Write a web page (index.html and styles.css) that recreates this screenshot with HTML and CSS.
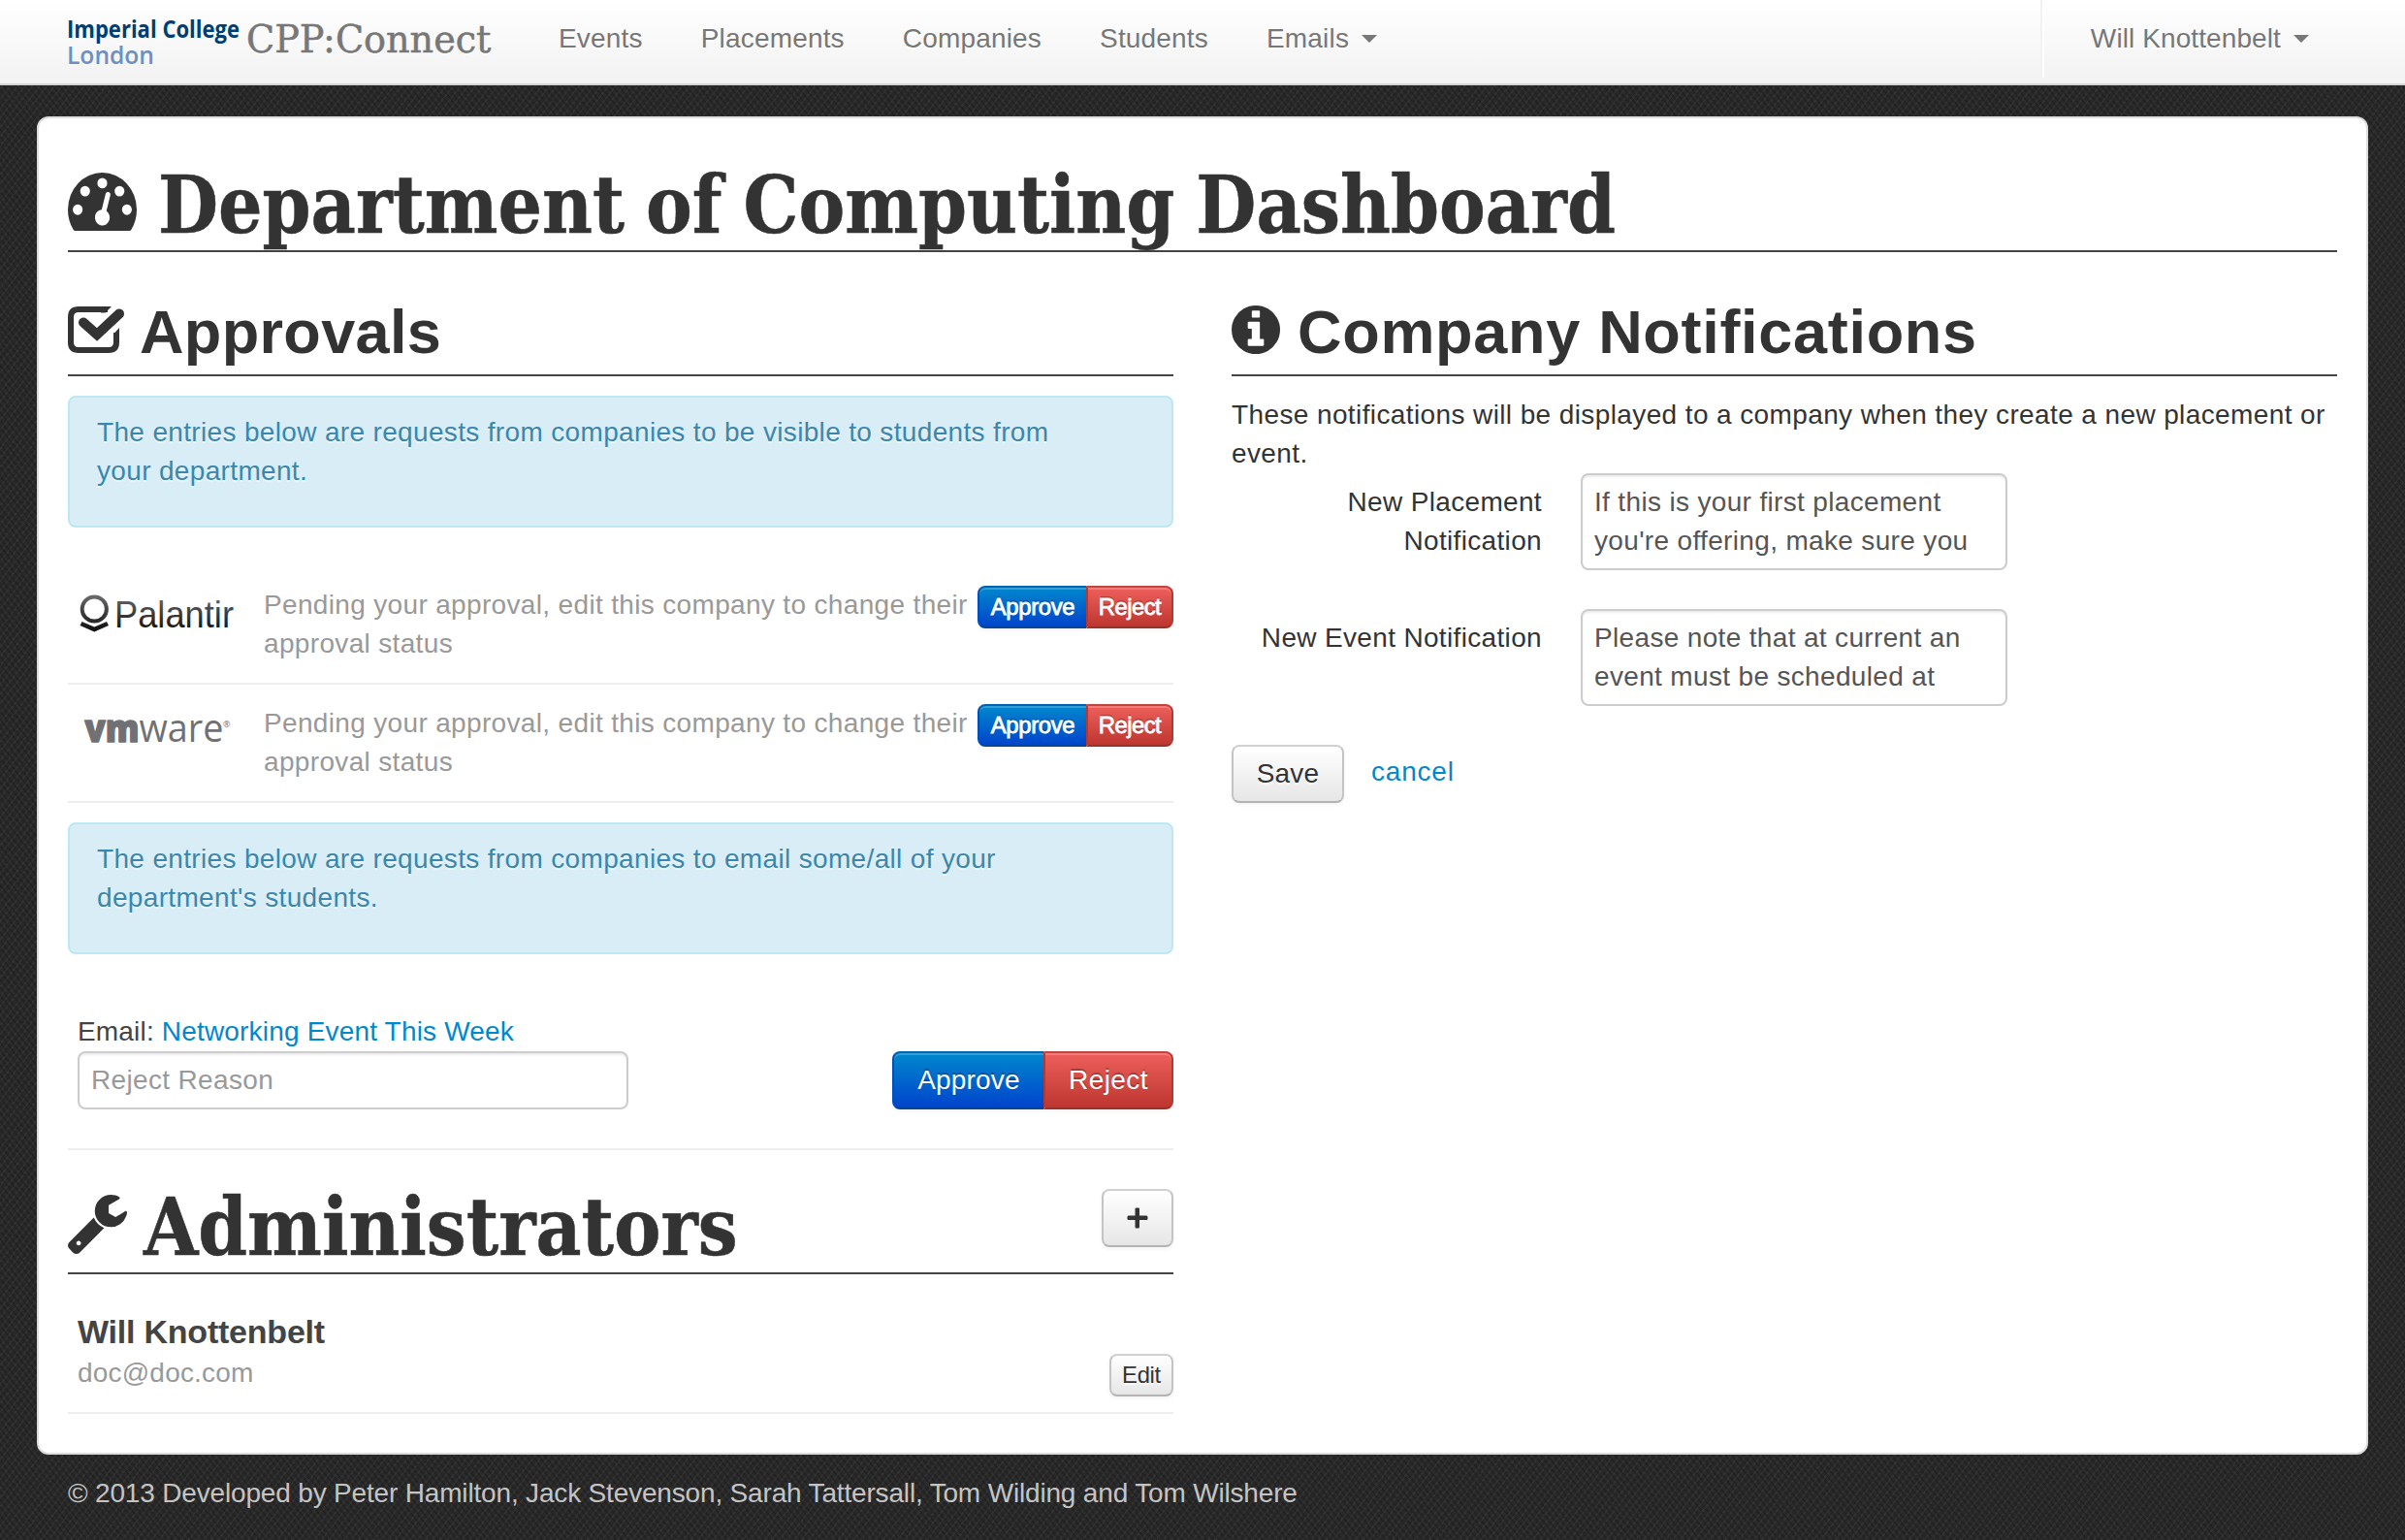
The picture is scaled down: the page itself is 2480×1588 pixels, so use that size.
FILE: index.html
```html
<!DOCTYPE html>
<html lang="en">
<head>
<meta charset="utf-8">
<title>CPP:Connect - Department of Computing Dashboard</title>
<link rel="stylesheet" href="styles.css">
</head>
<body>
<header class="navbar">
  <a class="brand" href="#">
    <svg class="college-logo" viewBox="0 0 178 50" role="img" aria-label="Imperial College London">
      <text class="college-name" x="-1" y="19" textLength="178" lengthAdjust="spacingAndGlyphs">Imperial College</text>
      <text class="college-city" x="-1" y="46" textLength="90" lengthAdjust="spacingAndGlyphs">London</text>
    </svg>
    <span class="brand-name"><span class="brand-text">CPP:Connect</span></span>
  </a>
  <nav class="nav">
    <a href="#">Events</a>
    <a href="#">Placements</a>
    <a href="#">Companies</a>
    <a href="#">Students</a>
    <a href="#">Emails<i class="caret"></i></a>
  </nav>
  <div class="user-menu"><a href="#">Will Knottenbelt<i class="caret"></i></a></div>
</header>

<main class="page">
  <h1 class="slab-heading page-title">
    <svg class="icon icon-dashboard" viewBox="0 256 1792 1408" preserveAspectRatio="none"><path d="M384 1152q0-53-37.5-90.5t-90.5-37.5-90.5 37.5-37.5 90.5 37.5 90.5 90.5 37.5 90.5-37.5 37.5-90.5zm192-448q0-53-37.5-90.5t-90.5-37.5-90.5 37.5-37.5 90.5 37.5 90.5 90.5 37.5 90.5-37.5 37.5-90.5zm428 481l101-382q6-26-7.5-48.5t-38.5-29.5-48 6.5-30 39.5l-101 382q-60 5-107 43.5t-63 98.5q-20 77 20 146t117 89 146-20 89-117q16-60-6-117t-72-91zm660-33q0-53-37.5-90.5t-90.5-37.5-90.5 37.5-37.5 90.5 37.5 90.5 90.5 37.5 90.5-37.5 37.5-90.5zm-640-640q0-53-37.5-90.5t-90.5-37.5-90.5 37.5-37.5 90.5 37.5 90.5 90.5 37.5 90.5-37.5 37.5-90.5zm448 192q0-53-37.5-90.5t-90.5-37.5-90.5 37.5-37.5 90.5 37.5 90.5 90.5 37.5 90.5-37.5 37.5-90.5zm320 448q0 261-141 483-19 29-54 29h-1402q-35 0-54-29-141-221-141-483 0-182 71-348t191-286 286-191 348-71 348 71 286 191 191 286 71 348z"/></svg>
    <span class="slab-text">Department of Computing Dashboard</span>
  </h1>

  <div class="columns">
    <section class="column">
      <h2 class="heading">
        <svg class="icon icon-check" viewBox="0 0 58 50"><path class="line" d="M41 3H11Q3 3 3 11V37Q3 45 11 45H42Q50 45 50 37V27"/><path d="M45 0L38.500 6.500H34V0zM53 22V32H47V28.500z"/><path class="tick" d="M16 16.500L30 29L53 7.500"/></svg>
        <span>Approvals</span>
      </h2>
      <div class="alert"><p>The entries below are requests from companies to be visible to students from<br>your department.</p></div>

      <div class="request request-first">
        <div class="company-logo">
          <svg viewBox="0 0 190 80" role="img" aria-label="Palantir">
            <defs><linearGradient id="ink" gradientUnits="userSpaceOnUse" x1="0" y1="10" x2="0" y2="48"><stop offset="0" stop-color="#6a6a6c"/><stop offset="1" stop-color="#0c0c0e"/></linearGradient></defs>
            <circle cx="27.300" cy="24" r="12.600" fill="none" stroke="url(#ink)" stroke-width="4"/>
            <path d="M14.500 37L27.300 42.500L40 37L42 41L27.300 47.500L12.500 41z" fill="url(#ink)"/>
            <text class="palantir" x="48" y="42.500" textLength="123" lengthAdjust="spacingAndGlyphs" fill="url(#ink)">Palantir</text>
          </svg>
        </div>
        <p class="pending">Pending your approval, edit this company to change their<br>approval status</p>
        <div class="btn-group"><button class="btn btn-small btn-primary">Approve</button><button class="btn btn-small btn-danger">Reject</button></div>
      </div>
      <div class="request">
        <div class="company-logo">
          <svg viewBox="0 0 190 80" role="img" aria-label="VMware">
            <text class="vmware-bold" x="17.500" y="38.500" textLength="56" lengthAdjust="spacingAndGlyphs">vm</text>
            <text class="vmware-thin" x="73.500" y="38.500" textLength="87" lengthAdjust="spacingAndGlyphs">ware</text>
            <text class="vmware-mark" x="160" y="24">®</text>
          </svg>
        </div>
        <p class="pending">Pending your approval, edit this company to change their<br>approval status</p>
        <div class="btn-group"><button class="btn btn-small btn-primary">Approve</button><button class="btn btn-small btn-danger">Reject</button></div>
      </div>

      <div class="alert alert-email"><p>The entries below are requests from companies to email some/all of your<br>department's students.</p></div>

      <div class="email-request">
        <p class="email-subject">Email: <a href="#">Networking Event This Week</a></p>
        <div class="email-actions">
          <input class="field reason" type="text" placeholder="Reject Reason">
          <div class="btn-group"><button class="btn btn-primary">Approve</button><button class="btn btn-danger">Reject</button></div>
        </div>
      </div>

      <div class="slab-heading admin-title">
        <svg class="icon icon-wrench" viewBox="85 128 1641 1643" preserveAspectRatio="none"><path d="M448 1472q0-26-19-45t-45-19-45 19-19 45 19 45 45 19 45-19 19-45zm644-420l-682 682q-37 37-90 37-52 0-91-37l-106-108q-38-36-38-90 0-53 38-91l681-681q39 98 114.5 173.5t173.5 114.5zm634-435q0 39-23 106-47 134-164.5 217.5t-258.5 83.500q-185 0-316.500-131.500t-131.500-316.500 131.500-316.500 316.500-131.500q58 0 121.500 16.500t107.500 46.500q16 11 16 28t-16 28l-293 169v224l193 107q5-3 79-48.500t135.500-81 70.500-35.500q15 0 23.500 10t8.500 25z"/></svg>
        <span class="slab-text">Administrators</span>
        <button class="btn btn-add" aria-label="Add administrator"><svg viewBox="0 0 22 22"><path d="M8.500 1.500Q8.500 .5 9.500 .5H12Q13 .5 13 1.500V8.500H20Q21.500 8.500 21.500 10V12Q21.500 13 20 13H13V20Q13 21.500 12 21.500H9.500Q8.500 21.500 8.500 20V13H1.500Q.5 13 .5 12V10Q.5 8.500 1.500 8.500H8.500z"/></svg></button>
      </div>
      <div class="admin">
        <div>
          <strong class="admin-name">Will Knottenbelt</strong>
          <span class="admin-email">doc@doc.com</span>
        </div>
        <button class="btn btn-small btn-edit">Edit</button>
      </div>
    </section>

    <section class="column">
      <h2 class="heading heading-notices">
        <svg class="icon icon-info" viewBox="128 128 1536 1536"><path d="M1152 1376v-160q0-14-9-23t-23-9h-96v-512q0-14-9-23t-23-9h-320q-14 0-23 9t-9 23v160q0 14 9 23t23 9h96v320h-96q-14 0-23 9t-9 23v160q0 14 9 23t23 9h448q14 0 23-9t9-23zm-128-896v-160q0-14-9-23t-23-9h-192q-14 0-23 9t-9 23v160q0 14 9 23t23 9h192q14 0 23-9t9-23zm640 416q0 209-103 385.500t-279.500 279.500-385.500 103-385.500-103-279.500-279.500-103-385.500 103-385.500 279.500-279.500 385.500-103 385.500 103 279.500 279.500 103 385.500z"/></svg>
        <span>Company Notifications</span>
      </h2>
      <p class="intro">These notifications will be displayed to a company when they create a new placement or<br>event.</p>
      <form class="notices">
        <div class="control">
          <label for="placement">New Placement<br>Notification</label>
          <textarea class="field" id="placement" rows="2">If this is your first placement
you're offering, make sure you</textarea>
        </div>
        <div class="control">
          <label for="event">New Event Notification</label>
          <textarea class="field" id="event" rows="2">Please note that at current an
event must be scheduled at</textarea>
        </div>
        <div class="form-actions"><button class="btn btn-save" type="button">Save</button><a class="cancel" href="#">cancel</a></div>
      </form>
    </section>
  </div>
</main>
<footer class="footer">© 2013 Developed by Peter Hamilton, Jack Stevenson, Sarah Tattersall, Tom Wilding and Tom Wilshere</footer>
</body>
</html>
```
FILE: styles.css
```css
* { box-sizing: border-box; }

body {
  margin: 0;
  min-height: 1588px;
  background-color: #292929;
  background-image:
    repeating-linear-gradient(52deg, rgba(0, 0, 0, .16) 0 2px, transparent 2px 5px),
    repeating-linear-gradient(-52deg, rgba(255, 255, 255, .04) 0 2px, transparent 2px 6px);
  color: #333;
  font: 28px/40px "Liberation Sans", Arial, sans-serif;
  letter-spacing: .34px;
}

p { margin: 0; white-space: nowrap; }
a { color: #08c; text-decoration: none; }

/* Navigation bar */
.navbar {
  display: flex;
  height: 88px;
  padding: 0 70px;
  border-bottom: 2px solid #d4d4d4;
  background: linear-gradient(#fff, #f2f2f2);
}
.brand { display: flex; width: 476px; padding-top: 20px; letter-spacing: 0; }
.college-logo { flex: none; width: 178px; height: 50px; overflow: visible; }
.college-name { fill: #003e74; font: 700 25.5px "Open Sans", sans-serif; }
.college-city { fill: #6f8fbf; font: 600 25.5px "Open Sans", sans-serif; }
.brand-name {
  margin-left: 6px;
  color: #777;
  font: 40px/40px "DejaVu Serif Condensed", "DejaVu Serif", serif;
  font-stretch: condensed;
  text-shadow: 0 2px 0 #fff;
  -webkit-text-stroke: .5px;
}
.brand-text { display: inline-block; transform: scaleX(1.06); transform-origin: 0 0; }
.nav { display: flex; letter-spacing: .18px; }
.nav a, .user-menu a {
  display: flex;
  padding: 20px 30px;
  color: #777;
  text-shadow: 0 2px 0 #fff;
  white-space: nowrap;
}
.caret {
  width: 0;
  height: 8px;
  margin: 16px 0 0 13px;
  border: 8px solid transparent;
  border-top-color: #777;
  border-bottom: 0;
}
.user-menu {
  height: 80px;
  margin-left: auto;
  padding-left: 20px;
  border-left: 2px solid #f2f2f2;
  box-shadow: inset 2px 0 0 #fff;
  letter-spacing: .1px;
}
.user-menu a { padding-right: 29px; }

/* Page card */
.page {
  height: 1380px;
  margin: 32px 38px 0;
  padding: 49px 30px 0;
  border: 2px solid #ddd;
  border-radius: 12px;
  background: #fff;
}
.slab-heading {
  display: flex;
  height: 89px;
  margin: 0;
  border-bottom: 2px solid #444;
  font: 700 82px/80px "DejaVu Serif Condensed", "DejaVu Serif", serif;
  font-stretch: condensed;
  letter-spacing: 0;
  white-space: nowrap;
}
.slab-text {
  width: 0;
  transform: scaleX(.984);
  transform-origin: 0 0;
  -webkit-text-stroke: .5px #333;
}
.page-title .slab-text { transform: scaleX(.97); word-spacing: -3px; }
.icon { flex: none; fill: #333; }
.icon-dashboard { width: 71px; height: 60px; margin: 7px 22px 0 0; }
.icon-check { width: 58px; height: 50px; margin: 14px 16px 0 0; }
.icon-check .line { fill: none; stroke: #333; stroke-width: 6; }
.icon-check .tick { fill: none; stroke: #333; stroke-width: 10; stroke-linecap: round; stroke-linejoin: miter; }
.icon-info { width: 50px; height: 50px; margin: 13px 18px 0 0; }
.icon-wrench { width: 61px; height: 61px; margin: 7px 17px 0 0; }

.columns { display: grid; grid-template-columns: 1140px 1140px; gap: 60px; margin-top: 42px; }
.heading {
  display: flex;
  height: 86px;
  margin: 0 0 20px;
  border-bottom: 2px solid #444;
  font-size: 63px;
  line-height: 80px;
  white-space: nowrap;
}
.heading-notices { letter-spacing: .7px; }

/* Approvals */
.alert {
  height: 136px;
  padding: 16px 28px;
  border: 2px solid #bce8f1;
  border-radius: 8px;
  background: #d9edf7;
  color: #3a87ad;
  text-shadow: 0 2px 0 rgba(255, 255, 255, .5);
}
.request { display: flex; height: 122px; padding-top: 20px; border-bottom: 2px solid #eee; }
.request-first { margin-top: 40px; }
.company-logo { flex: none; width: 202px; letter-spacing: 0; }
.company-logo svg { display: block; width: 190px; height: 80px; overflow: visible; }
.palantir { font: 39px "Liberation Sans", sans-serif; }
.vmware-bold { fill: #717174; stroke: #717174; stroke-width: 1.5px; stroke-linejoin: round; font: 800 39px "Open Sans", sans-serif; }
.vmware-thin { fill: #717174; font: 400 41px "Open Sans", sans-serif; }
.vmware-mark { fill: #717174; font: 9px "Open Sans", sans-serif; }
.pending { color: #999; }
.btn-group { display: flex; flex: none; margin-left: auto; }
.alert-email { margin-top: 20px; }

.email-request { height: 202px; padding: 60px 0 0 10px; border-bottom: 2px solid #eee; color: #444; }
.email-subject { letter-spacing: .18px; }
.email-actions { display: flex; }
.field {
  display: block;
  margin: 0;
  padding: 8px 12px;
  border: 2px solid #ccc;
  border-radius: 8px;
  background: #fff;
  box-shadow: inset 0 2px 2px rgba(0, 0, 0, .075);
  color: #555;
  font: inherit;
  letter-spacing: inherit;
  resize: none;
  overflow: hidden;
}
.field::placeholder { color: #999; opacity: 1; }
.reason { width: 568px; height: 60px; }

/* Buttons */
.btn {
  height: 60px;
  margin: 0;
  padding: 8px 0;
  border: 2px solid #ccc;
  border-color: #d0d0d0 #c4c4c4 #b3b3b3;
  border-radius: 8px;
  background: linear-gradient(#fff, #e6e6e6);
  box-shadow: inset 0 2px 0 rgba(255, 255, 255, .2), 0 2px 4px rgba(0, 0, 0, .05);
  color: #333;
  font: 28px/40px "Liberation Sans", Arial, sans-serif;
  letter-spacing: .2px;
  text-shadow: 0 2px 2px rgba(255, 255, 255, .75);
}
.btn-primary {
  width: 156px;
  border: 2px solid #0055b3;
  border-color: #0062b3 #0050b8 #00459b;
  border-right: 0;
  border-radius: 8px 0 0 8px;
  background: linear-gradient(#08c, #04c);
  color: #fff;
  text-shadow: 0 -2px 0 rgba(0, 0, 0, .25);
}
.btn-danger {
  width: 134px;
  border-color: #c0443f #b23a35 #9c302b;
  border-radius: 0 8px 8px 0;
  background: linear-gradient(#ee5f5b, #bd362f);
  color: #fff;
  letter-spacing: .4px;
  text-shadow: 0 -2px 0 rgba(0, 0, 0, .25);
}
.btn-small { height: 44px; padding: 0; font-size: 23.8px; letter-spacing: -.3px; -webkit-text-stroke: .8px; }
.btn-small.btn-primary { width: 112px; }
.btn-small.btn-danger { width: 90px; letter-spacing: -.5px; }
.btn-add { width: 74px; margin: 1px 0 0 auto; padding: 0; line-height: 0; }
.btn-add svg { width: 22px; height: 22px; fill: #333; }
.btn-save { width: 116px; }

/* Administrators */
.admin-title { margin-top: 39px; }
.admin { display: flex; height: 144px; padding: 40px 0 0 10px; border-bottom: 2px solid #eee; }
.admin-name { display: block; margin-top: -1px; color: #444; font-size: 34px; letter-spacing: -.22px; line-height: 40px; }
.admin-email { display: block; margin-top: 3px; color: #999; letter-spacing: .2px; }
.btn-edit { width: 66px; margin: 42px 0 0 auto; -webkit-text-stroke: 0; }

/* Notifications */
.intro { letter-spacing: .39px; }
.notices { margin: 0; }
.control { display: grid; grid-template-columns: 320px 440px; gap: 40px; height: 140px; }
.control label { padding-top: 10px; text-align: right; }
.control .field { width: 440px; height: 100px; white-space: pre; }
.form-actions { display: flex; gap: 28px; }
.cancel { padding-top: 8px; letter-spacing: .8px; }

.footer { height: 88px; padding: 20px 70px; color: #c4c4c4; letter-spacing: -.17px; white-space: nowrap; }
```
